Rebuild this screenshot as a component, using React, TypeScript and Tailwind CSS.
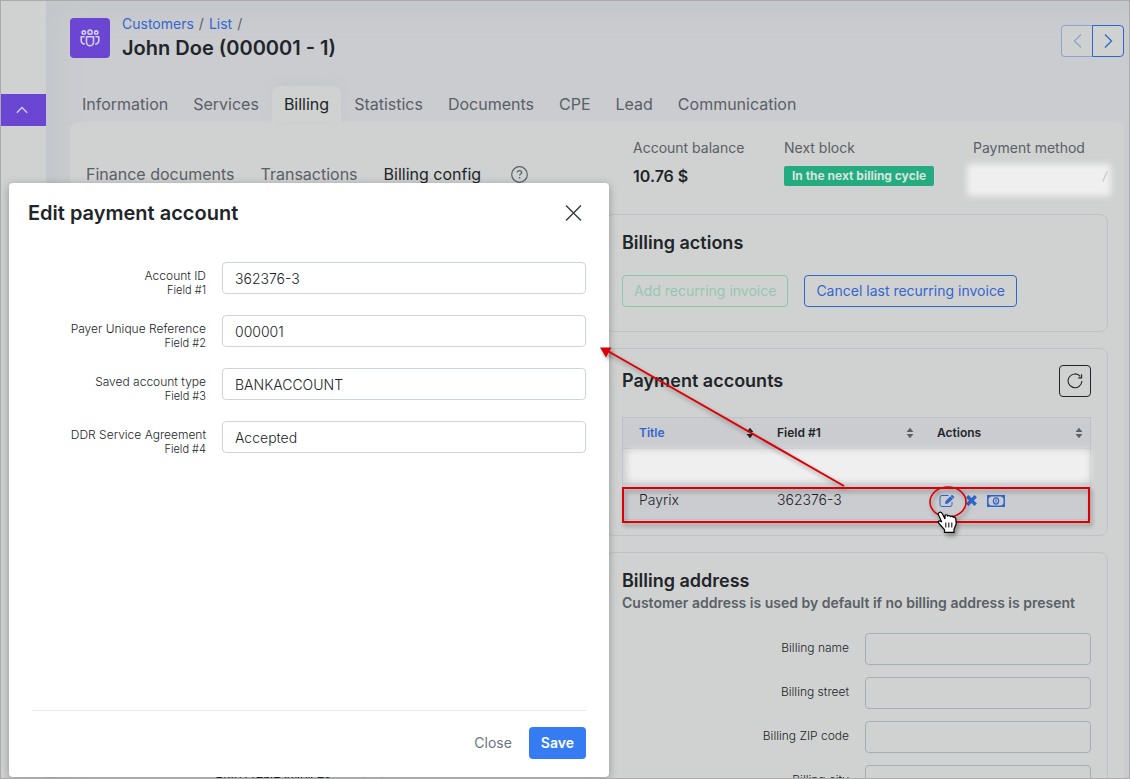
import React from "react";

const tabs = ["Information", "Services", "Billing", "Statistics", "Documents", "CPE", "Lead", "Communication"];

const accountFields = [
  { id: "field1", label: "Account ID", hint: "Field #1", value: "362376-3" },
  { id: "field2", label: "Payer Unique Reference", hint: "Field #2", value: "000001" },
  { id: "field3", label: "Saved account type", hint: "Field #3", value: "BANKACCOUNT" },
  { id: "field4", label: "DDR Service Agreement", hint: "Field #4", value: "Accepted" },
];

const addressFields = [
  { id: "name", label: "Billing name" },
  { id: "street", label: "Billing street" },
  { id: "zip", label: "Billing ZIP code" },
  { id: "city", label: "Billing city" },
];

function PeopleIcon() {
  return (
    <svg width="20" height="18" viewBox="0 0 20 18" fill="none" stroke="#d3cdf0" strokeWidth="1.6">
      <circle cx="10" cy="3.2" r="2.1" />
      <circle cx="3.8" cy="3.6" r="1.7" />
      <circle cx="16.2" cy="3.6" r="1.7" />
      <path d="M6.500 7.700h7v5.600a3.500 3.500 0 0 1-7 0z" strokeLinejoin="round" />
      <path d="M4.600 7.700H1.200v3.800c0 2 1.200 3.300 3.600 3.600M15.400 7.700h3.400v3.800c0 2-1.200 3.300-3.600 3.600" strokeLinejoin="round" />
    </svg>
  );
}

function SortIcon({ active = false }: { active?: boolean }) {
  return (
    <svg width="8" height="12" viewBox="0 0 8 12" className={active ? "fill-[#212529]" : "fill-[#596066]"}>
      <path d="M.6 5 4 .8 7.400 5zM.6 7h6.800L4 11.200z" stroke="none" />
    </svg>
  );
}

function HeaderCell({ label, active = false }: { label: string; active?: boolean }) {
  return (
    <th className="border-b border-[#bfc1c6] p-0 text-left font-medium">
      <button
        type="button"
        className={`flex h-[30px] w-full items-center justify-between pl-4 pr-[7px] text-xs font-semibold ${active ? "text-[#3466cd]" : "text-[#212529]"}`}
      >
        {label}
        <SortIcon active={active} />
      </button>
    </th>
  );
}

function Panel({ children, className = "" }: { children: React.ReactNode; className?: string }) {
  return <section className={`rounded-lg border border-[#bfc3c7] px-4 ${className}`}>{children}</section>;
}

function Annotations() {
  return (
    <svg
      className="pointer-events-none absolute right-0 -top-2 z-30 drop-shadow-[2px_3px_2px_rgba(0,0,0,0.35)]"
      width="508"
      height="200"
      viewBox="600 340 508 200"
      fill="none"
    >
      <rect x="623" y="488" width="466" height="34" stroke="#dc0004" strokeWidth="2" />
      <path d="M844 486 606 350" stroke="#dc0004" strokeWidth="2" />
      <path d="M600 347.500h11.500l-5.500 10z" fill="#dc0004" />
      <ellipse cx="948" cy="502" rx="18" ry="15" stroke="#dc0004" strokeWidth="1.6" />
      <path
        d="M939.300 512.500c1.500-.8 2.600.2 3.200 1.500l2.500 5v-3.600c.9-1 2.300-.8 2.800.6.800-.8 2.200-.6 2.800.5.900-.7 2.200-.4 2.700.8 1.100-.5 2.300.2 2.500 1.600l.4 5.200-2.200 5.200v3h-9.500v-2.600l-4.600-5.200-1.800-2.400c.4-1.400 1.900-1.600 2.900-.6l.7.6-3.400-7.700c-.2-.9.100-1.600 1-1.900z"
        fill="#fff"
        stroke="#000"
        strokeWidth="1.200"
      />
      <path d="M945.800 522.500v5M948.800 522.500v5M951.800 522.500v5" stroke="#000" strokeWidth="1" />
    </svg>
  );
}

function PaymentAccounts() {
  return (
    <div className="relative">
      <Panel className="h-[188px] pt-4">
        <div className="flex items-center justify-between">
          <h2 className="text-lg font-semibold text-[#212529]">Payment accounts</h2>
          <button
            type="button"
            aria-label="Refresh"
            className="flex size-8 items-center justify-center rounded border border-[#212529]"
          >
            <svg width="16" height="16" viewBox="0 0 16 16" fill="none" stroke="#212529" strokeWidth="1.100">
              <path d="M13.300 3.400A6.900 6.900 0 1 0 14.900 8" />
              <path d="M14.600 1.200v3.700h-3.400" />
            </svg>
          </button>
        </div>
        <table className="mt-5 w-full table-fixed border-separate border-spacing-0 border border-[#bfc1c6] bg-[#cbccd0]">
          <colgroup>
            <col className="w-[138px]" />
            <col className="w-[160px]" />
            <col />
          </colgroup>
          <thead>
            <tr>
              <HeaderCell label="Title" active />
              <HeaderCell label="Field #1" />
              <HeaderCell label="Actions" />
            </tr>
          </thead>
          <tbody>
            <tr>
              <td colSpan={3} className="h-[35px] border-b border-[#bfc1c6] bg-[#d0d2d1] p-0">
                <div className="ml-1 h-8 rounded-sm bg-[#efefef] blur-[3px]" />
              </td>
            </tr>
            <tr className="text-sm font-light text-[#212529]">
              <td className="h-[35px] p-0 pb-1 pl-4">Payrix</td>
              <td className="p-0 pb-1 pl-4">362376-3</td>
              <td className="p-0 pb-0.5 pl-[18px]">
                <div className="flex items-center gap-[10px] text-[#2f66cc]">
                  <button type="button" aria-label="Edit">
                    <svg width="17" height="14" viewBox="0 0 17 14" fill="none" stroke="currentColor">
                      <path d="M9.500 1.500H3A2 2 0 0 0 1 3.500v7a2 2 0 0 0 2 2h8a2 2 0 0 0 2-2V8" />
                      <path d="m6 10 .6-3L13 .7l2.600 2.500L9 9.500z" fill="currentColor" stroke="none" />
                      <path d="m11.600 2.200 2.500 2.500" stroke="#cbccd0" strokeWidth=".7" />
                    </svg>
                  </button>
                  <button type="button" aria-label="Delete">
                    <svg width="11" height="11" viewBox="0 0 11 11" stroke="currentColor" strokeWidth="3.500">
                      <path d="m1.300 1.300 8.400 8.400M9.700 1.300 1.300 9.700" />
                    </svg>
                  </button>
                  <button type="button" aria-label="Charge">
                    <svg width="18" height="12" viewBox="0 0 18 12" fill="none" stroke="currentColor">
                      <rect x=".75" y=".75" width="16.500" height="10.500" strokeWidth="1.500" />
                      <path d="M1 1h3L1 4zM17 1h-3l3 3zM1 11h3L1 8zM17 11h-3l3-3z" fill="currentColor" stroke="none" />
                      <ellipse cx="9" cy="6" rx="2.600" ry="3.100" strokeWidth="1.300" />
                      <path d="M9 4.300v3.400" />
                    </svg>
                  </button>
                </div>
              </td>
            </tr>
          </tbody>
        </table>
      </Panel>
      <Annotations />
    </div>
  );
}

function EditDialog() {
  return (
    <div
      role="dialog"
      aria-labelledby="dialog-title"
      className="absolute left-2 top-[182px] z-20 flex h-[594px] w-[600px] flex-col rounded bg-white shadow-[0_2px_8px_rgba(0,0,0,0.3)]"
    >
      <header className="flex items-center justify-between px-[19px] pt-4">
        <h2 id="dialog-title" className="text-xl leading-7 font-semibold text-[#212529]">
          Edit payment account
        </h2>
        <button type="button" aria-label="Close dialog" className="mr-2">
          <svg width="17" height="16" viewBox="0 0 17 16" stroke="#343a40" strokeWidth="1.400">
            <path d="m1 .500 15 15M16 .500l-15 15" />
          </svg>
        </button>
      </header>
      <form className="mt-[35px] flex flex-col gap-[21px] px-[23px]">
        {accountFields.map((f) => (
          <div key={f.id} className="flex h-8 gap-4">
            <label htmlFor={f.id} className="flex w-[174px] flex-col pt-[7px] text-right text-xs leading-[14px] font-light text-[#212529]">
              {f.label}
              <span className="text-[11px] leading-[14px]">{f.hint}</span>
            </label>
            <input
              id={f.id}
              defaultValue={f.value}
              className="h-8 min-w-0 flex-1 rounded border border-[#ced4da] px-3 text-sm font-light text-[#212529] outline-none"
            />
          </div>
        ))}
      </form>
      <footer className="mx-[23px] mt-auto flex justify-end gap-[5px] border-t border-[#e4e8ec] pt-4 pb-[18px]">
        <button type="button" className="h-8 px-3 text-sm text-[#6c757d]">
          Close
        </button>
        <button type="button" className="h-8 rounded bg-[#357bf2] px-3 text-sm font-semibold text-white">
          Save
        </button>
      </footer>
    </div>
  );
}

export default function App() {
  return (
    <div className="relative flex h-screen overflow-hidden border border-[#ababab] bg-[#cbccd0] font-[Inter,sans-serif]">
      <aside className="w-[45px] shrink-0 bg-[#d0d2d1] pt-[93px]">
        <button type="button" aria-label="Collapse" className="flex h-8 w-full items-center justify-center bg-[#6a46d2] pr-1">
          <svg width="12" height="8" viewBox="0 0 12 8" fill="none" stroke="#d5d0ea" strokeWidth="1.300">
            <path d="m.8 6.800 5.200-5.300 5.200 5.300" />
          </svg>
        </button>
      </aside>
      <main className="min-w-0 flex-1 bg-[#cbccd0] pl-6 pr-[5px] shadow-[inset_16px_14px_24px_#c3c7ca]">
        <header className="flex items-start pt-[14px]">
          <div className="mt-[3px] flex size-10 items-center justify-center rounded bg-[#6a46d2]">
            <PeopleIcon />
          </div>
          <div className="ml-3">
            <nav className="flex gap-[5px] text-sm leading-[18px] text-[#596066]">
              <a href="#customers" className="text-[#3466cd]">Customers</a>/<a href="#list" className="text-[#3466cd]">List</a>/
            </nav>
            <h1 className="text-xl leading-[30px] font-semibold text-[#212529]">John Doe (000001 - 1)</h1>
          </div>
          <div className="mt-[10px] ml-auto flex">
            <button type="button" aria-label="Previous" className="flex h-8 w-[31px] items-center justify-center rounded-l border border-r-0 border-[#8ba4d0] bg-[#cfd1d1]">
              <svg width="9" height="14" viewBox="0 0 9 14" fill="none" stroke="#8ba4d0" strokeWidth="1.300">
                <path d="M8 .500 1.500 7 8 13.500" />
              </svg>
            </button>
            <button type="button" aria-label="Next" className="flex h-8 w-8 items-center justify-center rounded-r border border-[#2f66cc] bg-[#d0d2d1]">
              <svg width="9" height="14" viewBox="0 0 9 14" fill="none" stroke="#2f66cc" strokeWidth="1.300">
                <path d="M1 .500 7.500 7 1 13.500" />
              </svg>
            </button>
          </div>
        </header>
        <nav className="mt-[23px] flex gap-px">
          {tabs.map((t) => (
            <a
              key={t}
              href={`#${t}`}
              className={
                t === "Billing"
                  ? "flex h-9 items-center rounded-t-lg bg-[#d0d2d1] px-3 text-base text-[#212529] shadow-[0_-4px_12px_#c4c8cb]"
                  : "flex h-9 items-center px-3 text-base text-[#596066]"
              }
            >
              {t}
            </a>
          ))}
        </nav>
        <div className="h-[800px] rounded-lg bg-[#d0d2d1] px-4">
          <div className="flex items-start justify-between pt-4">
            <nav className="flex items-center gap-[26px] pt-6 text-base text-[#596066]">
              <a href="#finance">Finance documents</a>
              <a href="#transactions">Transactions</a>
              <a href="#config" className="text-[#212529]">Billing config</a>
              <button type="button" aria-label="Help" className="ml-1">
                <svg width="17" height="17" viewBox="0 0 17 17" fill="none" stroke="#596066">
                  <circle cx="8.500" cy="8.500" r="7.800" strokeWidth="1.200" />
                  <path d="M6.300 6.600c0-1.300 1-2 2.200-2s2.200.8 2.200 1.900c0 1.500-2.100 1.600-2.100 3.100" strokeWidth="1.300" />
                  <path d="M8.600 11v1.400" strokeWidth="1.400" />
                </svg>
              </button>
            </nav>
            <dl className="grid h-[76px] w-[475px] grid-cols-[151px_189px_135px] text-sm">
              <div>
                <dt className="text-[#596066]">Account balance</dt>
                <dd className="mt-[6px] text-base font-semibold text-[#212529]">10.76 $</dd>
              </div>
              <div>
                <dt className="text-[#596066]">Next block</dt>
                <dd className="mt-2 flex">
                  <span className="h-5 rounded-xs bg-[#24ab80] px-2 text-xs leading-5 font-bold text-[#d8e5dd]">In the next billing cycle</span>
                </dd>
              </div>
              <div>
                <dt className="text-[#596066]">Payment method</dt>
                <dd className="relative mt-[6px] -ml-[6px] w-[144px]">
                  <div className="h-8 rounded-sm bg-[#efefef] blur-[3px]" />
                  <span className="absolute top-1 right-1 text-xs font-light text-[#b4b6b8] italic">/</span>
                </dd>
              </div>
            </dl>
          </div>
          <div className="grid grid-cols-2 gap-4">
            <Panel className="flex h-[590px] items-end pl-32 text-xs text-[#212529]">
              <label htmlFor="auto-create" className="mb-[18px]">Auto create invoices</label>
              <input id="auto-create" type="checkbox" className="mb-5 ml-8 h-3 w-5 appearance-none rounded-full border border-[#a8adb3]" />
            </Panel>
            <div className="flex min-w-0 flex-col gap-4">
              <Panel className="h-[118px] pt-[14px]">
                <h2 className="text-lg font-semibold text-[#212529]">Billing actions</h2>
                <div className="mt-[18px] flex gap-4">
                  <button type="button" className="h-8 rounded border border-[#85c8ac] px-[11px] text-sm text-[#94c7b1]">Add recurring invoice</button>
                  <button type="button" className="h-8 rounded border border-[#2f66cc] px-[11px] text-sm text-[#3466cd]">Cancel last recurring invoice</button>
                </div>
              </Panel>
              <PaymentAccounts />
              <Panel className="h-[320px] pt-4">
                <h2 className="text-lg leading-6 font-semibold text-[#212529]">Billing address</h2>
                <p className="text-sm font-semibold text-[#596066]">Customer address is used by default if no billing address is present</p>
                <form className="mt-5 flex flex-col gap-3">
                  {addressFields.map((f) => (
                    <div key={f.id} className="flex gap-4">
                      <label htmlFor={f.id} className="flex-1 pt-[7px] text-right text-xs font-light text-[#212529]">{f.label}</label>
                      <input id={f.id} className="h-8 w-[226px] rounded border border-[#a6adb4] bg-transparent px-3 text-sm outline-none" />
                    </div>
                  ))}
                </form>
              </Panel>
            </div>
          </div>
        </div>
      </main>
      <EditDialog />
    </div>
  );
}
